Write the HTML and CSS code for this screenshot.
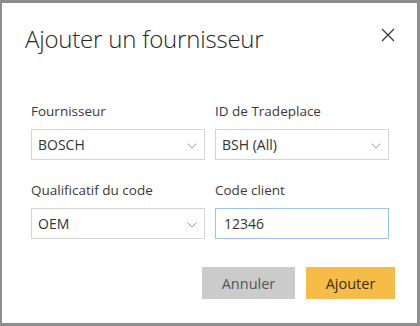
FILE: index.html
```html
<!DOCTYPE html>
<html lang="fr">
<head>
<meta charset="utf-8">
<link rel="stylesheet" href="styles.css">
</head>
<body>
<div class="backdrop">
  <div class="dialog">
    <div class="header">
      <h1 class="title">Ajouter un fournisseur</h1>
      <button class="close" aria-label="Fermer">
        <svg width="14" height="14" viewBox="0 0 14 14"><path d="M1 1 L13 13 M13 1 L1 13" stroke="#333" stroke-width="1.2" fill="none"/></svg>
      </button>
    </div>
    <div class="form">
      <div class="field">
        <label class="label">Fournisseur</label>
        <div class="select"><span>BOSCH</span><svg class="chev" width="10" height="6" viewBox="0 0 10 6"><path d="M0.5 0.5 L5 5 L9.5 0.5" stroke="#a0a0a0" stroke-width="1" fill="none"/></svg></div>
      </div>
      <div class="field">
        <label class="label">ID de Tradeplace</label>
        <div class="select"><span>BSH (All)</span><svg class="chev" width="10" height="6" viewBox="0 0 10 6"><path d="M0.5 0.5 L5 5 L9.5 0.5" stroke="#a0a0a0" stroke-width="1" fill="none"/></svg></div>
      </div>
      <div class="field">
        <label class="label">Qualificatif du code</label>
        <div class="select"><span>OEM</span><svg class="chev" width="10" height="6" viewBox="0 0 10 6"><path d="M0.5 0.5 L5 5 L9.5 0.5" stroke="#a0a0a0" stroke-width="1" fill="none"/></svg></div>
      </div>
      <div class="field">
        <label class="label">Code client</label>
        <div class="input focused"><span>12346</span></div>
      </div>
    </div>
    <div class="actions">
      <button class="btn cancel">Annuler</button>
      <button class="btn primary">Ajouter</button>
    </div>
  </div>
</div>
</body>
</html>
```
FILE: styles.css
```css
html, body {
  margin: 0;
  padding: 0;
}
body {
  width: 420px;
  height: 326px;
  background: #8d8d8d;
  font-family: "Open Sans", "Noto Sans", sans-serif;
  color: #333;
  overflow: hidden;
}
.backdrop {
  padding: 3px 3px 3px 2px;
}
.dialog {
  width: 415px;
  height: 320px;
  background: #fff;
  box-sizing: border-box;
  display: flex;
  flex-direction: column;
}
.header {
  display: flex;
  justify-content: space-between;
  align-items: flex-start;
  padding: 20px 22px 0 23px;
}
.title {
  margin: 0;
  font-size: 24px;
  font-weight: 300;
  line-height: 32px;
  color: #262626;
  letter-spacing: -0.2px;
}
.close {
  border: 0;
  background: none;
  padding: 0;
  margin-top: 5px;
  width: 14px;
  height: 14px;
  display: block;
}
.close svg { display: block; }
.form {
  display: grid;
  grid-template-columns: 174px 174px;
  column-gap: 10px;
  row-gap: 20px;
  padding: 46px 0 0 29px;
}
.field {
  display: flex;
  flex-direction: column;
}
.label {
  font-size: 13.5px;
  line-height: 20px;
  color: #3a3a3a;
  margin-bottom: 8px;
}
.select, .input {
  height: 31px;
  box-sizing: border-box;
  border: 1px solid #d4d4d4;
  display: flex;
  align-items: center;
  justify-content: space-between;
  padding: 0 7px 0 6px;
  font-size: 14px;
  color: #333;
}
.input.focused {
  border-color: #9ec3ee;
  padding-left: 8px;
}
.chev {
  margin-top: 2px;
  margin-right: 0;
}
.actions {
  display: flex;
  justify-content: flex-end;
  gap: 11px;
  padding: 28px 22px 0 0;
}
.btn {
  border: 0;
  height: 32px;
  font-family: inherit;
  font-size: 14.5px;
  padding: 0;
}
.cancel {
  width: 93px;
  background: #cbcbcb;
  color: #555;
}
.primary {
  width: 89px;
  background: #f5bd48;
  color: #3a2e16;
}
```
